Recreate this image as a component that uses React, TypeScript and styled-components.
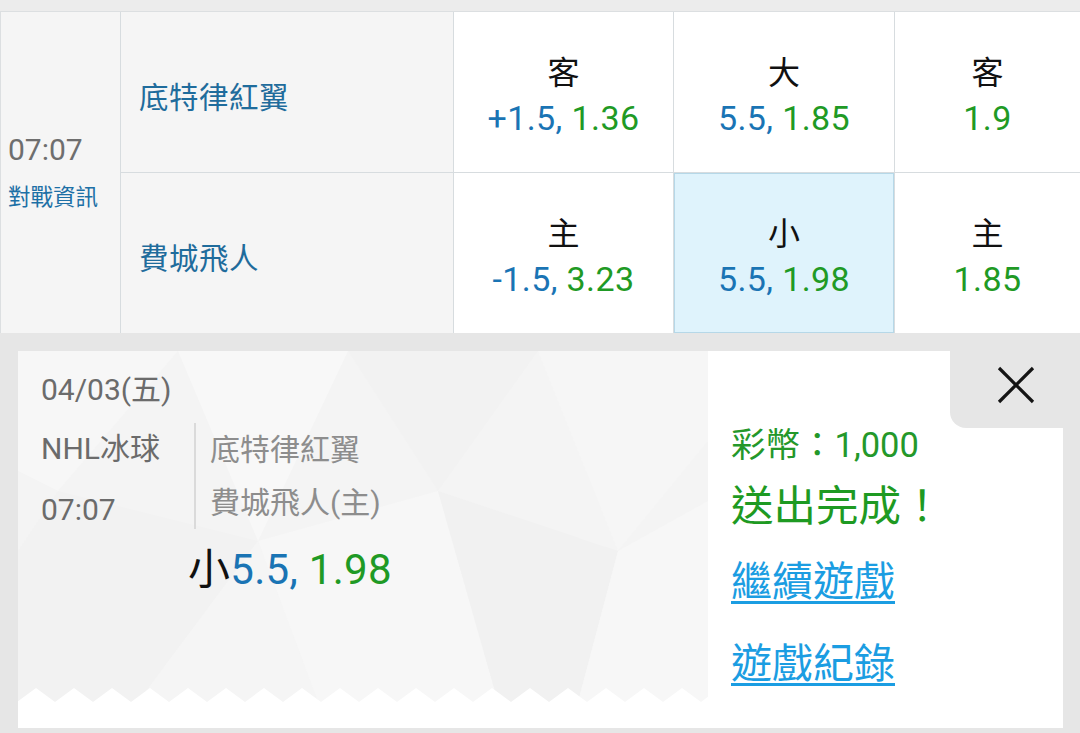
import React from "react";
import styled, { createGlobalStyle } from "styled-components";

const FONT = `Roboto, "Noto Sans CJK TC", "Noto Sans", sans-serif`;

const Global = createGlobalStyle`
  html, body { margin: 0; padding: 0; }
  body {
    background: #e6e6e6;
    font-family: ${FONT};
    width: 1080px;
    height: 733px;
    overflow: hidden;
  }
`;

const Page = styled.div`
  width: 1080px;
  height: 733px;
  display: flex;
  flex-direction: column;
  background: #e6e6e6;
`;

const TopStrip = styled.div`
  height: 11px;
  background: #ececec;
  border-bottom: 1px solid #dcdfe1;
  flex: none;
`;

const Table = styled.div`
  display: grid;
  grid-template-columns: 119px 332px 219px 220px 1fr;
  grid-template-rows: 160px 160px;
  gap: 1px;
  background: #d7dcdf;
  border-left: 1px solid #dcdfe1;
  flex: none;
`;

const TimeCell = styled.div`
  grid-row: span 2;
  background: #f5f5f5;
  display: flex;
  flex-direction: column;
  justify-content: center;
  padding-left: 7px;
  padding-top: 4px;
`;

const TimeText = styled.div`
  font-size: 30px;
  line-height: 44px;
  color: #6e6e6e;
`;

const InfoLink = styled.div`
  font-size: 22.5px;
  line-height: 50px;
  color: #1d70a6;
`;

const TeamCell = styled.div`
  background: #f5f5f5;
  display: flex;
  align-items: center;
  padding: 6px 0 0 18px;
  font-size: 29.5px;
  color: #1f6c9c;
  letter-spacing: 0.5px;
`;

const OddsCell = styled.div<{ $selected?: boolean }>`
  background: ${(p) => (p.$selected ? "#dff3fc" : "#ffffff")};
  box-shadow: ${(p) => (p.$selected ? "inset 0 0 0 1px #b6d8e8" : "none")};
  display: flex;
  flex-direction: column;
  align-items: center;
  justify-content: center;
  padding-top: 12px;
`;

const OddsLabel = styled.div`
  font-size: 32px;
  line-height: 40px;
  color: #111;
`;

const OddsValue = styled.div`
  font-size: 34px;
  line-height: 50px;
  letter-spacing: 0.4px;
`;

const Blue = styled.span`
  color: #1a74b4;
`;

const Green = styled.span`
  color: #1f9a25;
`;

const Black = styled.span`
  color: #111;
`;

const Card = styled.div`
  margin: 18px 17px 0 18px;
  height: 377px;
  display: flex;
  background: #fff;
  flex: none;
`;

const TicketPanel = styled.div`
  width: 690px;
  height: 377px;
  position: relative;
  background: #fff;
  flex: none;
`;

const PatternArt = styled.svg`
  position: absolute;
  left: 0;
  top: 0;
  width: 690px;
  height: 351px;
`;

const TicketContent = styled.div`
  position: relative;
  padding: 19px 0 0 23px;
  display: flex;
  flex-direction: column;
`;

const DateLine = styled.div`
  font-size: 30px;
  line-height: 40px;
  color: #6b6b6b;
`;

const MatchRow = styled.div`
  display: flex;
  margin-top: 13px;
  align-items: flex-start;
`;

const InfoCol = styled.div`
  width: 153px;
  display: flex;
  flex-direction: column;
  gap: 9px;
`;

const InfoLine = styled.div`
  font-size: 30px;
  line-height: 52px;
  color: #6b6b6b;
`;

const TeamsCol = styled.div`
  border-left: 2px solid #dadada;
  padding-left: 14px;
  display: flex;
  flex-direction: column;
`;

const TeamLine = styled.div`
  font-size: 30px;
  line-height: 53px;
  color: #8d8d8d;
`;

const BetLine = styled.div`
  margin: 11px 0 0 147px;
  font-size: 42px;
  line-height: 46px;
  letter-spacing: 0.3px;
`;

const ResultPanel = styled.div`
  flex: 1;
  display: flex;
  flex-direction: column;
  background: #fff;
`;

const CloseRow = styled.div`
  display: flex;
  justify-content: flex-end;
  height: 77px;
`;

const CloseTab = styled.button`
  width: 113px;
  height: 77px;
  border: none;
  padding: 0 0 9px 18px;
  background: #e6e6e6;
  border-bottom-left-radius: 16px;
  display: flex;
  align-items: center;
  justify-content: center;
  cursor: pointer;
`;

const ResultBody = styled.div`
  padding-left: 23px;
  display: flex;
  flex-direction: column;
`;

const Coins = styled.div`
  font-size: 34.5px;
  line-height: 34px;
  color: #24982a;
`;

const Done = styled.div`
  margin-top: 20px;
  font-size: 42.5px;
  line-height: 50px;
  color: #1e9a22;
`;

const NavLink = styled.a<{ $gap: number }>`
  display: block;
  margin-top: ${(p) => p.$gap}px;
  font-size: 41px;
  line-height: 48px;
  color: #1b9de2;
  text-decoration: underline;
  text-decoration-thickness: 3px;
  text-underline-offset: 5px;
  cursor: pointer;
`;

function Pattern() {
  const period = 38;
  const pts: string[] = ["0,351", "0,346"];
  for (let x = -1; x < 700; x += period) {
    pts.push(`${x},351`);
    pts.push(`${x + 19},337`);
  }
  pts.push("690,351");
  return (
    <PatternArt viewBox="0 0 690 351" preserveAspectRatio="none">
      <rect x="0" y="0" width="690" height="351" fill="#f4f4f4" />
      <polygon points="0,0 160,0 40,140 0,120" fill="#f7f7f7" />
      <polygon points="160,0 330,0 240,190" fill="#f8f8f8" />
      <polygon points="40,140 240,190 120,351 0,351 0,200" fill="#f2f2f2" />
      <polygon points="330,0 520,0 420,140" fill="#f2f2f2" />
      <polygon points="240,190 420,140 480,351 300,351" fill="#f7f7f7" />
      <polygon points="520,0 690,0 690,90 600,200" fill="#f6f6f6" />
      <polygon points="420,140 600,200 560,351 480,351" fill="#f1f1f1" />
      <polygon points="600,200 690,150 690,351 560,351" fill="#f7f7f7" />
      <polygon points="120,351 240,190 300,351" fill="#f5f5f5" />
      <polygon points={pts.join(" ")} fill="#ffffff" />
    </PatternArt>
  );
}

function CloseIcon() {
  return (
    <svg width="38" height="38" viewBox="0 0 38 38">
      <line x1="2" y1="2" x2="36" y2="36" stroke="#141414" strokeWidth="3.2" />
      <line x1="36" y1="2" x2="2" y2="36" stroke="#141414" strokeWidth="3.2" />
    </svg>
  );
}

type Odds = { label: string; a?: string; b: string; selected?: boolean };

const row1: Odds[] = [
  { label: "客", a: "+1.5, ", b: "1.36" },
  { label: "大", a: "5.5, ", b: "1.85" },
  { label: "客", b: "1.9" },
];
const row2: Odds[] = [
  { label: "主", a: "-1.5, ", b: "3.23" },
  { label: "小", a: "5.5, ", b: "1.98", selected: true },
  { label: "主", b: "1.85" },
];

function OddsBox({ o }: { o: Odds }) {
  return (
    <OddsCell $selected={o.selected}>
      <OddsLabel>{o.label}</OddsLabel>
      <OddsValue>
        {o.a && <Blue>{o.a}</Blue>}
        <Green>{o.b}</Green>
      </OddsValue>
    </OddsCell>
  );
}

export default function App() {
  return (
    <Page>
      <Global />
      <TopStrip />
      <Table>
        <TimeCell>
          <TimeText>07:07</TimeText>
          <InfoLink>對戰資訊</InfoLink>
        </TimeCell>
        <TeamCell>底特律紅翼</TeamCell>
        {row1.map((o, i) => (
          <OddsBox key={"a" + i} o={o} />
        ))}
        <TeamCell>費城飛人</TeamCell>
        {row2.map((o, i) => (
          <OddsBox key={"b" + i} o={o} />
        ))}
      </Table>
      <Card>
        <TicketPanel>
          <Pattern />
          <TicketContent>
            <DateLine>04/03(五)</DateLine>
            <MatchRow>
              <InfoCol>
                <InfoLine>NHL冰球</InfoLine>
                <InfoLine>07:07</InfoLine>
              </InfoCol>
              <TeamsCol>
                <TeamLine>底特律紅翼</TeamLine>
                <TeamLine>費城飛人(主)</TeamLine>
              </TeamsCol>
            </MatchRow>
            <BetLine>
              <Black>小</Black>
              <Blue>5.5, </Blue>
              <Green>1.98</Green>
            </BetLine>
          </TicketContent>
        </TicketPanel>
        <ResultPanel>
          <CloseRow>
            <CloseTab aria-label="close">
              <CloseIcon />
            </CloseTab>
          </CloseRow>
          <ResultBody>
            <Coins>彩幣：1,000</Coins>
            <Done>送出完成！</Done>
            <NavLink $gap={26}>繼續遊戲</NavLink>
            <NavLink $gap={34}>遊戲紀錄</NavLink>
          </ResultBody>
        </ResultPanel>
      </Card>
    </Page>
  );
}
